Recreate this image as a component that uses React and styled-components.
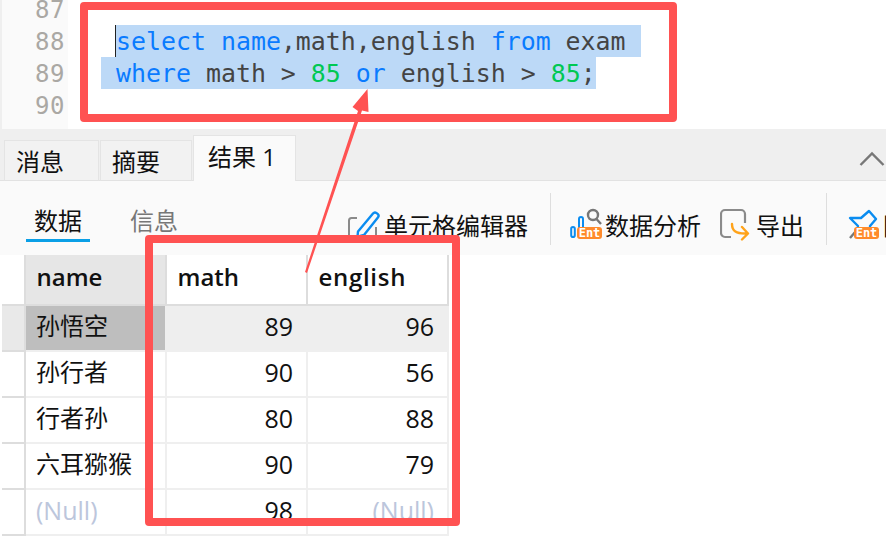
import React from 'react';
import styled, { createGlobalStyle } from 'styled-components';

const uiFont = `"Open Sans", "Noto Sans CJK SC", sans-serif`;
const red = '#ff5252';

const GlobalStyle = createGlobalStyle`
  html, body { margin: 0; padding: 0; background: #fff; }
  body { font-family: ${uiFont}; color: #111; }
`;

const Page = styled.div`
  position: relative;
  width: 886px;
  height: 542px;
  overflow: hidden;
  display: flex;
  flex-direction: column;
  background: #fff;
`;

/* editor */
const Editor = styled.div`
  height: 129px;
  flex: none;
  display: flex;
  background: #fff;
  overflow: hidden;
`;
const Gutter = styled.div`
  width: 66px;
  flex: none;
  border-left: 2px solid #efefef;
  background: #fafafa;
  margin-top: -6px;
`;
const LineNo = styled.div`
  height: 32px;
  padding-right: 3px;
  text-align: right;
  color: #aaa8a4;
  font: 24px/32px "DejaVu Sans Mono", monospace;
  letter-spacing: 0.5px;
`;
const Code = styled.div`
  flex: 1;
  padding: 25px 0 0 33px;
`;
const CodeLine = styled.div`
  height: 32px;
  font: 24.9px/34px "DejaVu Sans Mono", monospace;
  color: #444;
  white-space: pre;
  display: flex;
`;
const Selected = styled.span`
  background: #bcd9f7;
  height: 32px;
  margin-left: ${(p) => p.$indent}px;
  padding-left: ${(p) => p.$pad}px;
  padding-right: ${(p) => p.$right}px;
  ${(p) => p.$caret && 'box-shadow: inset 1px 0 0 #222;'}
`;
const Kw = styled.span`
  color: #0a7bff;
`;
const Num = styled.span`
  color: #00c853;
`;

/* tabs */
const TabBar = styled.div`
  height: 51px;
  flex: none;
  background: #efefef;
  border-bottom: 1px solid #e2e2e2;
  display: flex;
  align-items: flex-end;
  padding-left: 4px;
  gap: 1px;
  position: relative;
`;
const Tab = styled.div`
  width: ${(p) => p.$w}px;
  height: ${(p) => (p.$active ? 46 : 41)}px;
  box-sizing: border-box;
  margin-bottom: -1px;
  border: 1px solid #e4e4e4;
  border-bottom: ${(p) => (p.$active ? 'none' : '1px solid #e2e2e2')};
  background: ${(p) => (p.$active ? '#fafafa' : '#f2f2f2')};
  font-size: 24px;
  line-height: ${(p) => (p.$active ? 42 : 41)}px;
  padding-left: ${(p) => (p.$active ? 14 : 11)}px;
  color: #111;
  white-space: nowrap;
`;
const Collapse = styled.svg`
  position: absolute;
  right: 1px;
  top: 22px;
`;

/* toolbar */
const Toolbar = styled.div`
  height: 74px;
  flex: none;
  background: #fafafa;
  display: flex;
  align-items: flex-start;
`;
const ViewTabs = styled.div`
  width: 348px;
  box-sizing: border-box;
  flex: none;
  padding-left: 26px;
  display: flex;
  gap: 40px;
`;
const ViewTab = styled.div`
  width: ${(p) => (p.$active ? 64 : 48)}px;
  height: 61px;
  box-sizing: border-box;
  padding-top: 21px;
  text-align: center;
  font-size: 24px;
  line-height: 38px;
  color: ${(p) => (p.$active ? '#111' : '#777')};
  border-bottom: 3px solid ${(p) => (p.$active ? '#0a9fe6' : 'transparent')};
`;
const ToolButton = styled.div`
  display: flex;
  align-items: center;
  gap: ${(p) => p.$gap}px;
  margin-top: 24px;
  margin-left: ${(p) => p.$left || 0}px;
  height: 38px;
  font-size: 24px;
  white-space: nowrap;
  color: #111;
  flex: none;
`;
const Divider = styled.div`
  width: 1px;
  height: 52px;
  margin: 12px ${(p) => p.$right}px 0 ${(p) => p.$left}px;
  background: #dedede;
  flex: none;
`;
const IconWrap = styled.div`
  position: relative;
  width: ${(p) => p.$w}px;
  height: 34px;
  flex: none;
`;
const Badge = styled.span`
  position: absolute;
  left: ${(p) => p.$left}px;
  bottom: 2px;
  width: 25px;
  height: 12px;
  border-radius: 3px;
  background: #ff8a2b;
  color: #fff;
  font: bold 12px/12px "DejaVu Sans Mono", monospace;
  text-align: center;
`;

/* result grid */
const Grid = styled.div`
  padding-left: 2px;
`;
const Row = styled.div`
  display: grid;
  grid-template-columns: 24px 141px 141px 141px;
  width: 447px;
  height: ${(p) => p.$h}px;
  background: ${(p) => (p.$current ? '#eeeeee' : '#fff')};
  border-bottom: 2px solid ${(p) => (p.$head ? '#dddddd' : '#efefef')};
`;
const RowMark = styled.div`
  border-right: 2px solid #dddddd;
  background: ${(p) => (p.$current ? '#e9e9e9' : '#fff')};
  box-shadow: 0 2px 0 #dddddd;
`;
const HeadCell = styled.div`
  box-sizing: border-box;
  padding-left: 10.5px;
  font-size: 24px;
  font-weight: 600;
  line-height: 44px;
  letter-spacing: ${(p) => p.$track || 0}px;
  color: #111;
  border-right: 2px solid #dddddd;
  background: ${(p) => (p.$sorted ? '#e6e6e6' : '#fff')};
`;
const Cell = styled.div`
  box-sizing: border-box;
  padding: 0 ${(p) => (p.$num ? 13 : 10)}px;
  font-size: ${(p) => (p.$num || p.$nil ? 25 : 24)}px;
  line-height: 40px;
  text-align: ${(p) => (p.$num ? 'right' : 'left')};
  color: ${(p) => (p.$nil ? '#bcc6dc' : '#111')};
  background: ${(p) => (p.$picked ? '#bebebe' : 'transparent')};
  border-right: 2px solid ${(p) => (p.$current ? '#eeeeee' : '#efefef')};
`;

/* annotation over the screenshot */
const RedBox = styled.div`
  position: absolute;
  left: ${(p) => p.$x}px;
  top: ${(p) => p.$y}px;
  width: ${(p) => p.$w}px;
  height: ${(p) => p.$h}px;
  box-sizing: border-box;
  border: 8px solid ${red};
  border-radius: 4px;
`;
const Arrow = styled.svg`
  position: absolute;
  left: 0;
  top: 0;
`;

const PencilIcon = () => (
  <svg width="32" height="34" viewBox="0 0 32 34" fill="none">
    <path d="M9 11H3.5Q1 11 1 13.5V30" stroke="#8a8a8a" strokeWidth="2" />
    <path d="M28 20v10" stroke="#8a8a8a" strokeWidth="2" />
    <path d="M10 24.5 25 6.5a2.6 2.6 0 0 1 3.6-.4l1 .8a2.6 2.6 0 0 1 .3 3.6L16 28l-6.5 1.6z" stroke="#0a8cf0" strokeWidth="2.4" strokeLinejoin="round" />
  </svg>
);

const ChartIcon = () => (
  <IconWrap $w={31}>
    <svg width="32" height="34" viewBox="0 0 32 34" fill="none">
      <rect x="1.2" y="20" width="3.6" height="10" rx="1.8" stroke="#0a8cf0" strokeWidth="2" />
      <rect x="9" y="10" width="4" height="12" rx="2" stroke="#0a8cf0" strokeWidth="2" />
      <circle cx="23" cy="8" r="5" stroke="#777" strokeWidth="2.4" />
      <path d="M26.5 12 31 17" stroke="#777" strokeWidth="2.4" />
    </svg>
    <Badge $left={7}>Ent</Badge>
  </IconWrap>
);

const ExportIcon = () => (
  <svg width="32" height="34" viewBox="0 0 32 34" fill="none">
    <path d="M11 30H5a4 4 0 0 1-4-4V7a4 4 0 0 1 4-4h16a4 4 0 0 1 4 4v9" stroke="#8a8a8a" strokeWidth="2.2" />
    <path d="M12 17c0 7 4 10 15 9.500M22 20l6 6.500-6 6" stroke="#ffa31a" strokeWidth="2.4" strokeLinecap="round" strokeLinejoin="round" />
  </svg>
);

const PinIcon = () => (
  <IconWrap $w={30}>
    <svg width="30" height="34" viewBox="0 0 30 34" fill="none">
      <path d="M2 11 13 11 21 4 28 12 22 19 23 26H8L10 19z" stroke="#0a8cf0" strokeWidth="2.4" strokeLinejoin="round" />
      <path d="M8 24 2 31" stroke="#777" strokeWidth="2.4" />
    </svg>
    <Badge $left={6}>Ent</Badge>
  </IconWrap>
);

const rows = [
  { name: '孙悟空', math: 89, english: 96 },
  { name: '孙行者', math: 90, english: 56 },
  { name: '行者孙', math: 80, english: 88 },
  { name: '六耳猕猴', math: 90, english: 79 },
  { name: null, math: 98, english: null },
];

export default function App() {
  return (
    <Page>
      <GlobalStyle />
      <Editor>
        <Gutter>
          {[87, 88, 89, 90].map((n) => (
            <LineNo key={n}>{n}</LineNo>
          ))}
          <LineNo />
        </Gutter>
        <Code>
          <CodeLine>
            <Selected $indent={14} $pad={1} $right={15} $caret>
              <Kw>select</Kw> <Kw>name</Kw>,math,english <Kw>from</Kw> exam
            </Selected>
          </CodeLine>
          <CodeLine>
            <Selected $indent={0} $pad={15} $right={0}>
              <Kw>where</Kw> math &gt; <Num>85</Num> <Kw>or</Kw> english &gt; <Num>85</Num>;
            </Selected>
          </CodeLine>
        </Code>
      </Editor>

      <TabBar>
        <Tab $w={95}>消息</Tab>
        <Tab $w={92}>摘要</Tab>
        <Tab $w={103} $active>结果 1</Tab>
        <Collapse width="26" height="16" viewBox="0 0 26 16" fill="none">
          <path d="M1.500 14 13 2.500 24.500 14" stroke="#777" strokeWidth="2.400" />
        </Collapse>
      </TabBar>

      <Toolbar>
        <ViewTabs>
          <ViewTab $active>数据</ViewTab>
          <ViewTab>信息</ViewTab>
        </ViewTabs>
        <ToolButton $gap={4}>
          <PencilIcon />
          单元格编辑器
        </ToolButton>
        <Divider $left={22} $right={19} />
        <ToolButton $gap={4}>
          <ChartIcon />
          数据分析
        </ToolButton>
        <ToolButton $gap={4} $left={19}>
          <ExportIcon />
          导出
        </ToolButton>
        <Divider $left={22} $right={21} />
        <ToolButton $gap={5}>
          <PinIcon />
          图表
        </ToolButton>
      </Toolbar>

      <Grid>
        <Row $h={49} $head>
          <RowMark />
          <HeadCell $sorted>name</HeadCell>
          <HeadCell>math</HeadCell>
          <HeadCell $track={0.7}>english</HeadCell>
        </Row>
        {rows.map((r, i) => (
          <Row key={i} $h={44} $current={i === 0}>
            <RowMark $current={i === 0} />
            <Cell $picked={i === 0} $nil={r.name === null} $current={i === 0}>
              {r.name ?? '(Null)'}
            </Cell>
            <Cell $num $current={i === 0}>{r.math}</Cell>
            <Cell $num $nil={r.english === null} $current={i === 0}>
              {r.english ?? '(Null)'}
            </Cell>
          </Row>
        ))}
      </Grid>

      <RedBox $x={80} $y={2} $w={597} $h={120} />
      <RedBox $x={145} $y={235} $w={315} $h={291} />
      <Arrow width="886" height="542" viewBox="0 0 886 542">
        <path d="M305 272 358 111 352.500 107 367.500 89 368.500 112 362 110.500 307 273z" fill={red} />
      </Arrow>
    </Page>
  );
}
